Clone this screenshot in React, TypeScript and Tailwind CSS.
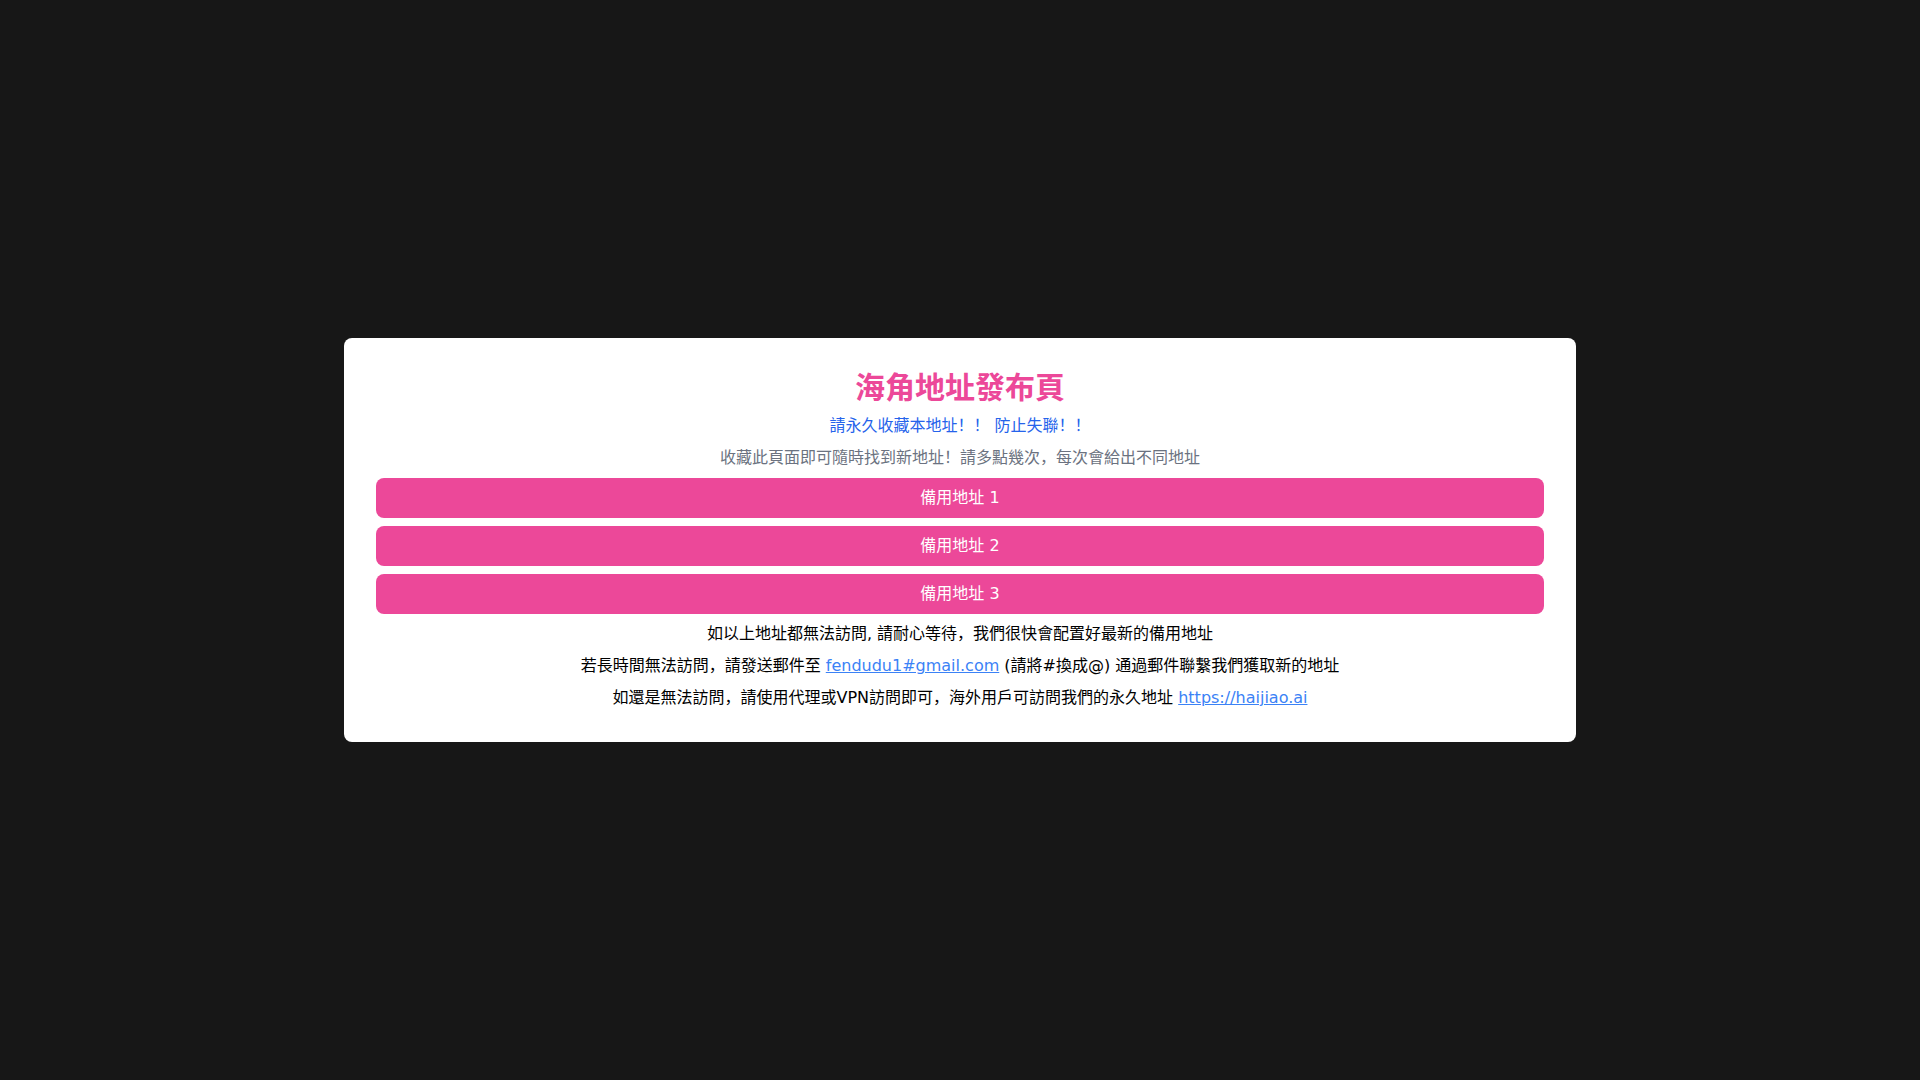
import React from "react";

export default function App() {
  const font = { fontFamily: '"DejaVu Sans", "Noto Sans CJK SC", sans-serif' };
  return (
    <div
      className="min-h-screen w-full bg-[#171717] flex items-center justify-center"
      style={font}
    >
      <div className="w-[1232px] bg-white rounded-lg p-8 text-center">
        <h1 className="text-3xl font-bold text-[#ec4899] mb-2">海角地址發布頁</h1>
        <p className="text-base text-[#2563eb] mb-2">請永久收藏本地址！！ 防止失聯！！</p>
        <p className="text-base text-[#6b7280] mb-2">收藏此頁面即可隨時找到新地址！請多點幾次，每次會給出不同地址</p>
        <div className="flex flex-col gap-2">
          <button className="w-full h-10 rounded-lg bg-[#ec4899] text-white text-base">備用地址 1</button>
          <button className="w-full h-10 rounded-lg bg-[#ec4899] text-white text-base">備用地址 2</button>
          <button className="w-full h-10 rounded-lg bg-[#ec4899] text-white text-base">備用地址 3</button>
        </div>
        <div className="mt-2 flex flex-col gap-2 text-base text-black">
          <p>如以上地址都無法訪問, 請耐心等待，我們很快會配置好最新的備用地址</p>
          <p>
            若長時間無法訪問，請發送郵件至{" "}
            <a href="#" className="text-[#3b82f6] underline">fendudu1#gmail.com</a>{" "}
            (請將#換成@) 通過郵件聯繫我們獲取新的地址
          </p>
          <p>
            如還是無法訪問，請使用代理或VPN訪問即可，海外用戶可訪問我們的永久地址{" "}
            <a href="#" className="text-[#3b82f6] underline">https://haijiao.ai</a>
          </p>
        </div>
      </div>
    </div>
  );
}
